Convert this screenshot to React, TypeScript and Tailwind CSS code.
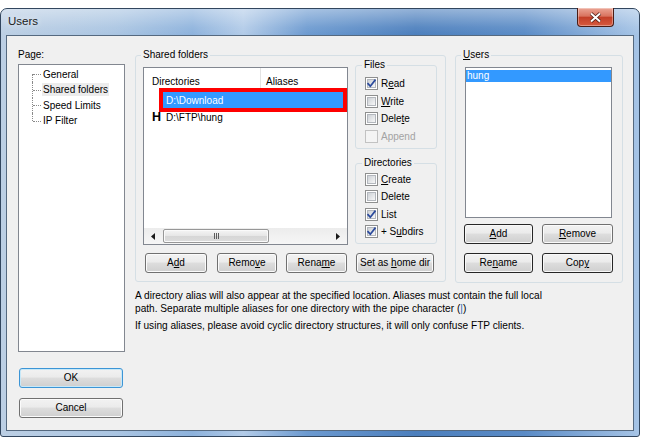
import React from 'react'

const FONT = "font-['Liberation_Sans',Arial,sans-serif]"

type BtnProps = { w: string; children: React.ReactNode; tone?: 'dark' | 'focus' | 'plain' }

function Btn({ w, children, tone = 'plain' }: BtnProps) {
  const edge =
    tone === 'dark'
      ? 'border-[#262626] shadow-[inset_0_0_0_1px_#f8f8f8]'
      : tone === 'focus'
        ? 'border-[#3c95d6] shadow-[inset_0_0_0_1px_#c7e8f8]'
        : 'border-[#707070] shadow-[inset_0_0_0_1px_#fbfbfb]'
  return (
    <button
      className={`${w} h-[20px] shrink-0 rounded-[3px] border ${edge} bg-[linear-gradient(#f2f2f2,#ebebeb_45%,#dddddd_50%,#cfcfcf)] flex items-center justify-center text-[10px] leading-none text-black`}>
      <span>{children}</span>
    </button>
  )
}

function Check({ checked, disabled, children }: { checked?: boolean; disabled?: boolean; children: React.ReactNode }) {
  return (
    <div className="h-[17.5px] flex items-center gap-[3px]">
      <span
        className={`w-[13px] h-[13px] shrink-0 border flex items-center justify-center ${
          disabled ? 'border-[#c2c2c2] bg-[#f4f4f4]' : 'border-[#8e8f8f] bg-white'
        }`}>
        <span
          className={`w-[9px] h-[9px] flex items-center justify-center ${
            disabled ? '' : 'border border-[#b3b7bd] bg-[linear-gradient(135deg,#cdd1d6,#f7f7f7)]'
          }`}>
          {checked && (
            <svg width="9" height="9" viewBox="0 0 9 9" className="overflow-visible">
              <path d="M0.5 4.2 L3.3 7.2 L8.5 0.6" fill="none" stroke="#2b4a9c" strokeWidth="1.7" />
            </svg>
          )}
        </span>
      </span>
      <span className={disabled ? 'text-[#a3a3a3]' : ''}>{children}</span>
    </div>
  )
}

const PAGES = ['General', 'Shared folders', 'Speed Limits', 'IP Filter']

function PageTree() {
  return (
    <div className="w-[107px] h-[288px] mt-[3px] border border-[#828790] bg-white pt-[1.5px]">
      {PAGES.map((p, i) => (
        <div key={p} className="h-[15.5px] flex items-center">
          <div className="relative w-[23px] h-full shrink-0">
            <div
              className={`absolute left-[13px] border-l border-dotted border-[#8a8a8a] ${
                i === 0 ? 'top-1/2 bottom-0' : i === PAGES.length - 1 ? 'top-0 h-1/2' : 'top-0 bottom-0'
              }`}
            />
            <div className="absolute left-[14px] right-[1px] top-1/2 border-t border-dotted border-[#8a8a8a]" />
          </div>
          <span className={`px-[1px] leading-[13px] ${i === 1 ? 'bg-[#ececec]' : ''}`}>{p}</span>
        </div>
      ))}
    </div>
  )
}

function Arrow({ dir }: { dir: 'l' | 'r' }) {
  return (
    <svg width="4" height="7" viewBox="0 0 4 7">
      <path d={dir === 'l' ? 'M4 0 L0 3.5 L4 7 Z' : 'M0 0 L4 3.5 L0 7 Z'} fill="#1a1a1a" />
    </svg>
  )
}

function DirList() {
  return (
    <div className="w-[205px] h-[178px] mt-[6px] shrink-0 border border-[#828790] bg-white flex flex-col">
      <div className="h-[23px] flex shrink-0">
        <div className="w-[117px] pl-[8px] pt-[3px] flex items-center border-r border-[#e3e3e3]">Directories</div>
        <div className="pl-[5px] pt-[3px] flex items-center">Aliases</div>
      </div>
      <div className="h-[16px] mt-[1px] flex">
        <span className="w-[19px] shrink-0" />
        <div className="w-[180px] h-full bg-[#3399ff] text-white pl-[3px] flex items-center outline-4 outline-[#ff0000]">
          D:\Download
        </div>
      </div>
      <div className="h-[17px] mt-[1px] flex items-center">
        <span className="w-[19px] shrink-0 pl-[8px] font-bold text-[12.5px] leading-none">H</span>
        <span className="pl-[3px]">D:\FTP\hung</span>
      </div>
      <div className="mt-auto h-[16px] flex items-center bg-[linear-gradient(#ececec,#f6f6f6)]">
        <div className="w-[18px] flex justify-center">
          <Arrow dir="l" />
        </div>
        <div className="w-[106px] h-[14px] ml-[1px] rounded-[2px] border border-[#979797] bg-[linear-gradient(#f5f5f5,#e6e6e6_50%,#d6d6d6_50%,#dcdcdc)] shadow-[inset_0_0_0_1px_#fafafa] flex items-center justify-center gap-[1px]">
          <span className="w-[1px] h-[6px] bg-[#5c5c5c]" />
          <span className="w-[1px] h-[6px] bg-[#5c5c5c]" />
          <span className="w-[1px] h-[6px] bg-[#5c5c5c]" />
        </div>
        <div className="flex-1" />
        <div className="w-[18px] flex justify-center">
          <Arrow dir="r" />
        </div>
      </div>
    </div>
  )
}

export default function App() {
  return (
    <div className={`w-[645px] h-[444px] bg-white pt-[8px] overflow-hidden ${FONT} text-[10px] text-black`}>
      <div className="w-[640px] h-[429px] flex flex-col rounded-t-[7px] rounded-b-[3px] border border-[#32465e] bg-[linear-gradient(90deg,#bccfe4,#aac5e2_18%,#8db2dc_30%,#b2cbe8_38%,#6c9ad0_48%,#4c7fbd_65%,#5a8bc6_82%,#a6c4e6)] px-[5px] pb-[5px]">
        {/* Titlebar */}
        <div className="h-[26px] shrink-0 flex items-start -mx-[5px] px-[5px] bg-[linear-gradient(rgba(255,255,255,0.4),rgba(255,255,255,0.08)_70%,rgba(255,255,255,0))] rounded-t-[6px]">
          <span className="pl-[2px] self-center text-[11.5px] text-[#1b1b1b] [text-shadow:0_0_6px_rgba(255,255,255,0.95)]">Users</span>
          <div className="ml-auto mr-[20px] -mt-[1px] w-[37px] h-[19px] rounded-b-[4px] border border-t-0 border-[#4a1c15] bg-[linear-gradient(#eba595,#d9735f_45%,#c33f28_52%,#d65a3f)] shadow-[inset_0_0_0_1px_rgba(255,255,255,0.35)] flex items-center justify-center">
            <svg width="13" height="11" viewBox="0 0 13 11">
              <path d="M2 1.5 L11 9.5 M11 1.5 L2 9.5" stroke="#4a1a12" strokeWidth="3.6" />
              <path d="M2 1.5 L11 9.5 M11 1.5 L2 9.5" stroke="#ffffff" strokeWidth="2" />
            </svg>
          </div>
        </div>

        {/* Client */}
        <div className="flex-1 flex border border-[#55697f] bg-[#f0f0f0] pt-[13px] pl-[11px]">
          {/* Left column */}
          <div className="w-[107px] flex flex-col">
            <div className="h-[12px] leading-[12px]">Page:</div>
            <PageTree />
            <div className="mt-[16px] ml-[1px]">
              <Btn w="w-[104px]" tone="focus">OK</Btn>
            </div>
            <div className="mt-[10px] ml-[1px]">
              <Btn w="w-[104px]">Cancel</Btn>
            </div>
          </div>

          {/* Right column */}
          <div className="ml-[10px] flex flex-col">
            <div className="flex gap-[9px]">
              <fieldset className="w-[311px] h-[233px] border border-[#d5dfe5] rounded-[3px] px-[7px]">
                <legend className="ml-[-2px] px-[2px] leading-[12px]">Shared folders</legend>
                <div className="flex gap-[7px] items-start">
                  <DirList />
                  <div className="w-[82px] -mt-[2px] flex flex-col">
                    <fieldset className="h-[90px] border border-[#d5dfe5] rounded-[3px] pl-[9px] pt-[4px]">
                      <legend className="ml-[-3px] px-[2px] leading-[12px]">Files</legend>
                      <Check checked>R<u>e</u>ad</Check>
                      <Check><u>W</u>rite</Check>
                      <Check>Dele<u>t</u>e</Check>
                      <Check disabled>Append</Check>
                    </fieldset>
                    <fieldset className="h-[87px] mt-[8px] border border-[#d5dfe5] rounded-[3px] pl-[9px] pt-[1.5px]">
                      <legend className="ml-[-3px] px-[2px] leading-[12px]">Directories</legend>
                      <Check><u>C</u>reate</Check>
                      <Check>Delete</Check>
                      <Check checked>List</Check>
                      <Check checked>+ S<u>u</u>bdirs</Check>
                    </fieldset>
                  </div>
                </div>
                <div className="flex mt-[8px]">
                  <div className="ml-[2px]">
                    <Btn w="w-[62px]">A<u>d</u>d</Btn>
                  </div>
                  <div className="ml-[10px]">
                    <Btn w="w-[60px]">Remo<u>v</u>e</Btn>
                  </div>
                  <div className="ml-[9px]">
                    <Btn w="w-[61px]">Rena<u>m</u>e</Btn>
                  </div>
                  <div className="ml-[9px]">
                    <Btn w="w-[78px]">Set as <u>h</u>ome dir</Btn>
                  </div>
                </div>
              </fieldset>

              <fieldset className="w-[168px] h-[234px] border border-[#d5dfe5] rounded-[3px] px-[7px]">
                <legend className="ml-[-2px] px-[2px] leading-[12px]">
                  <u>U</u>sers
                </legend>
                <div className="w-[147px] h-[151px] ml-[2px] mt-[6px] border border-[#828790] bg-white pt-[2px]">
                  <div className="h-[12px] leading-[12px] bg-[#3399ff] text-white pl-[1px]">hung</div>
                </div>
                <div className="flex mt-[6px] ml-[1px] gap-[9px]">
                  <Btn w="w-[69px]" tone="dark"><u>A</u>dd</Btn>
                  <Btn w="w-[71px]"><u>R</u>emove</Btn>
                </div>
                <div className="flex mt-[9px] ml-[1px] gap-[9px]">
                  <Btn w="w-[69px]" tone="dark">Re<u>n</u>ame</Btn>
                  <Btn w="w-[71px]" tone="dark">Cop<u>y</u></Btn>
                </div>
              </fieldset>
            </div>

            <div className="mt-[6px] leading-[13px] text-[10.15px]">
              <p>A directory alias will also appear at the specified location. Aliases must contain the full local</p>
              <p>
                path. Separate multiple aliases for one directory with the pipe character (<span className="text-[#2c64b4]">|</span>)
              </p>
              <p className="mt-[4px]">If using aliases, please avoid cyclic directory structures, it will only confuse FTP clients.</p>
            </div>
          </div>
        </div>
      </div>
    </div>
  )
}
